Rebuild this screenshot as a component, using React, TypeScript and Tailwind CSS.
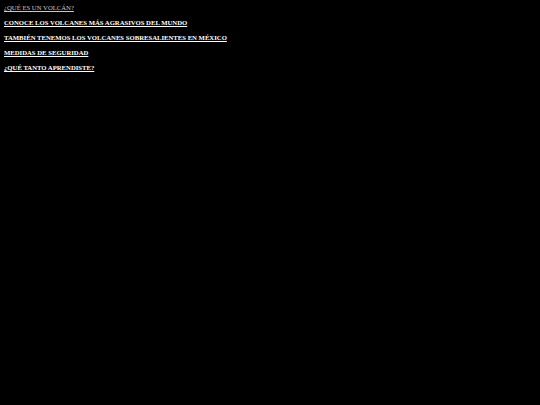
export default function App() {
  const items = [
    "CONOCE LOS VOLCANES MÁS AGRASIVOS DEL MUNDO",
    "TAMBIÉN TENEMOS LOS VOLCANES SOBRESALIENTES EN MÉXICO",
    "MEDIDAS DE SEGURIDAD",
    "¿QUÉ TANTO APRENDISTE?",
  ];
  return (
    <div className="w-[540px] h-[405px] bg-black px-[4px] pt-[3px] text-[6.7px] leading-[9px] font-['Liberation_Serif',serif]">
      <div className="flex flex-col gap-[6px]">
        <a className="underline text-[#c8c8c8]">¿QUÉ ES UN VOLCÁN?</a>
        {items.map((t) => (
          <a key={t} className="underline font-bold text-white">{t}</a>
        ))}
      </div>
    </div>
  );
}
